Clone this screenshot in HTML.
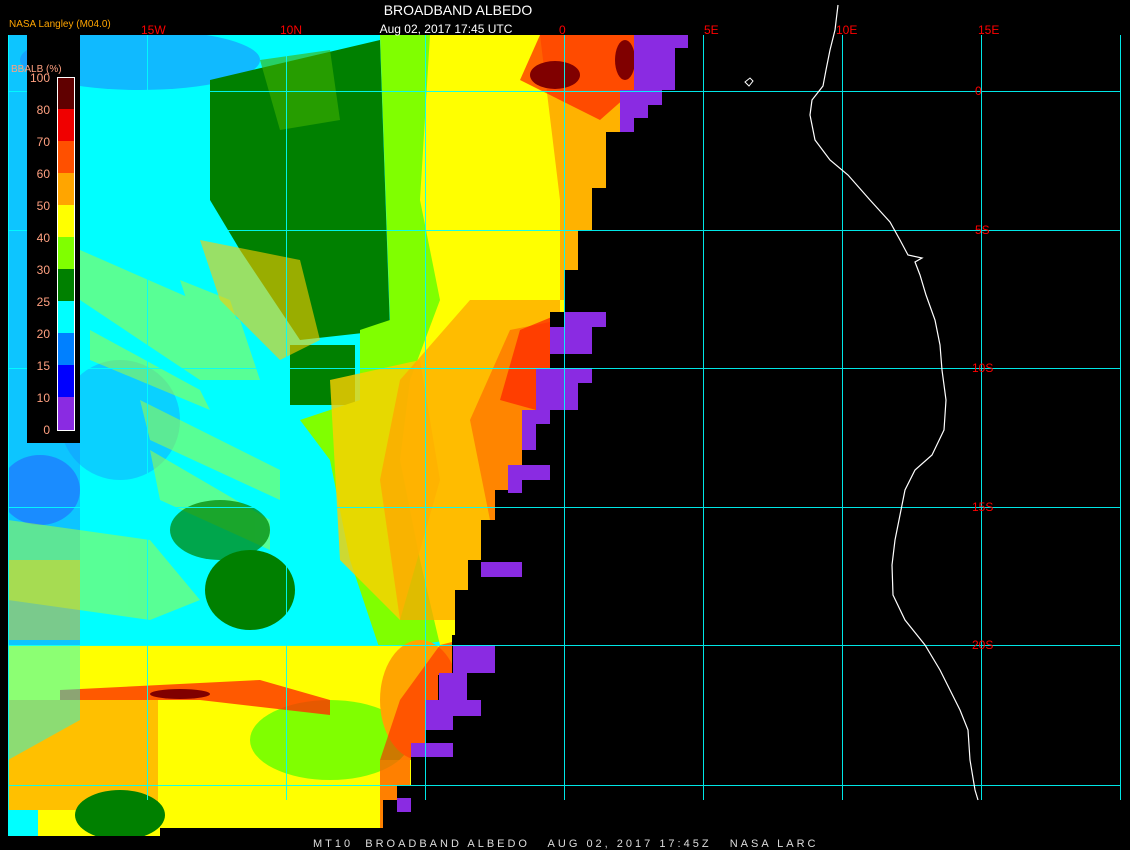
<!DOCTYPE html>
<html><head><meta charset="utf-8"><style>
html,body{margin:0;padding:0;background:#000;width:1130px;height:850px;overflow:hidden}
svg{display:block}
text{font-family:"Liberation Sans",sans-serif}
</style></head><body>
<svg width="1130" height="850" viewBox="0 0 1130 850" xmlns="http://www.w3.org/2000/svg">
<rect width="1130" height="850" fill="#000"/>
<defs>
<clipPath id="d">
<polygon points="8,35 634,35 634,90 620,90 620,132 606,132 606,188 592,188 592,230 578,230 578,270 564,270 564,312 550,312 550,368 536,368 536,410 522,410 522,465 508,465 508,490 495,490 495,520 481,520 481,560 468,560 468,590 455,590 455,635 452,635 452,675 438,675 438,700 425,700 425,745 411,745 411,785 397,785 397,800 383,800 383,828 160,828 160,836 80,836 80,836 8,836"/>
</clipPath>
</defs>
<g clip-path="url(#d)">
<rect x="8" y="35" width="630" height="805" fill="#00ffff"/>
<rect x="8" y="35" width="72" height="800" fill="#1a8cff" opacity="0.5"/>
<ellipse cx="140" cy="60" rx="120" ry="30" fill="#1a8cff" opacity="0.6"/>
<ellipse cx="40" cy="490" rx="40" ry="35" fill="#1a8cff"/>
<ellipse cx="120" cy="420" rx="60" ry="60" fill="#1a8cff" opacity="0.4"/>
<g fill="#a0ff40" opacity="0.55">
<polygon points="80,250 240,320 260,380 200,380 80,300"/>
<polygon points="140,400 280,470 280,500 150,440"/>
<polygon points="90,330 200,390 210,410 90,360"/>
<polygon points="150,450 270,520 270,550 160,500"/>
<polygon points="8,520 150,540 200,600 150,620 8,600"/>
<polygon points="180,280 230,300 240,330 190,310"/>
</g>
<polygon points="8,560 80,560 80,640 8,640" fill="#ffd000" opacity="0.45"/>
<polygon points="210,80 380,40 390,330 300,340 240,250 210,200" fill="#008000"/>
<polygon points="260,60 330,50 340,120 280,130" fill="#40b000" opacity="0.6"/>
<rect x="290" y="345" width="65" height="60" fill="#008000"/>
<ellipse cx="250" cy="590" rx="45" ry="40" fill="#008000"/>
<ellipse cx="220" cy="530" rx="50" ry="30" fill="#008000" opacity="0.7"/>
<polygon points="380,35 460,35 450,640 380,650 350,560 330,460 300,420 360,400 360,330 390,320" fill="#80ff00"/>
<polygon points="200,240 300,260 320,340 280,360 220,300" fill="#ffcc00" opacity="0.6"/>
<polygon points="430,35 640,35 640,640 440,645 420,560 400,460 410,380 440,300 420,200" fill="#ffff00"/>
<polygon points="330,380 420,360 440,480 400,620 340,560" fill="#ffd000" opacity="0.8"/>
<polygon points="470,300 560,300 560,620 400,620 380,480 400,380" fill="#ffa500" opacity="0.75"/>
<polygon points="540,35 640,35 640,300 560,300 560,200" fill="#ffa500" opacity="0.85"/>
<polygon points="510,330 560,320 560,520 490,520 470,420" fill="#ff6000" opacity="0.6"/>
<rect x="8" y="645" width="460" height="200" fill="#ffff00"/>
<rect x="8" y="700" width="150" height="110" fill="#ffa500" opacity="0.7"/>
<ellipse cx="330" cy="740" rx="80" ry="40" fill="#80ff00"/>
<ellipse cx="420" cy="700" rx="40" ry="60" fill="#ffa500"/>
<polygon points="60,690 260,680 330,700 330,715 200,700 60,700" fill="#ff3000" opacity="0.8"/>
<ellipse cx="180" cy="694" rx="30" ry="5" fill="#800000"/>
<polygon points="8,645 80,645 80,720 8,760" fill="#00ffff" opacity="0.45"/>
<ellipse cx="120" cy="815" rx="45" ry="25" fill="#008000"/>
<rect x="8" y="810" width="30" height="30" fill="#00ffff"/>
<polygon points="540,35 634,35 634,90 600,120 560,100 520,80" fill="#ff2000" opacity="0.7"/>
<ellipse cx="555" cy="75" rx="25" ry="14" fill="#800000"/>
<ellipse cx="625" cy="60" rx="10" ry="20" fill="#800000"/>
<polygon points="520,330 564,312 550,368 536,410 500,400" fill="#ff2000" opacity="0.7"/>
<polygon points="440,645 460,640 450,700 420,760 380,760 400,700" fill="#ff2000" opacity="0.6"/>
<rect x="380" y="760" width="30" height="70" fill="#ff6000" opacity="0.8"/>
</g>
<g fill="#8a2be2">
<rect x="634" y="35" width="54" height="13"/><rect x="634" y="48" width="41" height="42"/>
<rect x="620" y="90" width="42" height="15"/><rect x="620" y="105" width="28" height="13"/><rect x="620" y="118" width="14" height="14"/>
<rect x="564" y="312" width="42" height="15"/><rect x="550" y="327" width="42" height="27"/>
<rect x="536" y="368" width="56" height="15"/><rect x="536" y="383" width="42" height="27"/><rect x="522" y="410" width="28" height="14"/><rect x="522" y="424" width="14" height="26"/>
<rect x="508" y="465" width="42" height="15"/><rect x="508" y="480" width="14" height="13"/>
<rect x="481" y="562" width="41" height="15"/>
<rect x="453" y="645" width="42" height="28"/><rect x="439" y="673" width="28" height="27"/><rect x="425" y="700" width="56" height="16"/><rect x="425" y="716" width="28" height="14"/>
<rect x="411" y="743" width="42" height="14"/>
<rect x="397" y="798" width="14" height="14"/>
</g>
<g stroke="#00ffff" stroke-width="1" opacity="0.9">
<line x1="8" y1="91.5" x2="1120" y2="91.5"/><line x1="8" y1="230.5" x2="1120" y2="230.5"/><line x1="8" y1="368.5" x2="1120" y2="368.5"/>
<line x1="8" y1="507.5" x2="1120" y2="507.5"/><line x1="8" y1="645.5" x2="1120" y2="645.5"/><line x1="8" y1="785.5" x2="1120" y2="785.5"/>
<line x1="8.5" y1="35" x2="8.5" y2="836"/><line x1="147.5" y1="35" x2="147.5" y2="800"/><line x1="286.5" y1="35" x2="286.5" y2="800"/>
<line x1="425.5" y1="35" x2="425.5" y2="800"/><line x1="564.5" y1="35" x2="564.5" y2="800"/><line x1="703.5" y1="35" x2="703.5" y2="800"/>
<line x1="842.5" y1="35" x2="842.5" y2="800"/><line x1="981.5" y1="35" x2="981.5" y2="800"/><line x1="1120.5" y1="35" x2="1120.5" y2="800"/>
</g>
<polyline fill="none" stroke="#fff" stroke-width="1.2" points="838,5 835,30 830,50 826,70 823,86 812,100 810,115 815,140 830,160 848,175 870,200 890,222 900,240 908,255 922,258 915,262 920,275 926,295 935,320 940,345 942,370 946,400 944,430 932,455 915,470 905,490 900,515 895,540 892,565 893,595 905,620 925,645 940,670 950,690 960,710 968,730 970,760 975,790 978,800"/>
<path d="M745,82 l5,-4 l3,3 l-4,5 z" fill="none" stroke="#fff"/>
<rect x="27" y="35" width="53" height="408" fill="#000"/>
<g>
<rect x="57" y="77" width="17" height="32" fill="#600000"/>
<rect x="57" y="109" width="17" height="32" fill="#f00000"/>
<rect x="57" y="141" width="17" height="32" fill="#ff5000"/>
<rect x="57" y="173" width="17" height="32" fill="#ffa500"/>
<rect x="57" y="205" width="17" height="32" fill="#ffff00"/>
<rect x="57" y="237" width="17" height="32" fill="#80ff00"/>
<rect x="57" y="269" width="17" height="32" fill="#008000"/>
<rect x="57" y="301" width="17" height="32" fill="#00ffff"/>
<rect x="57" y="333" width="17" height="32" fill="#0080ff"/>
<rect x="57" y="365" width="17" height="32" fill="#0000ff"/>
<rect x="57" y="397" width="17" height="33" fill="#8a2be2"/>
<rect x="57.5" y="77.5" width="17" height="353" fill="none" stroke="#fff"/>
</g>
<g fill="#ffa080" font-size="12" text-anchor="end">
<text x="50" y="82">100</text><text x="50" y="114">80</text><text x="50" y="146">70</text><text x="50" y="178">60</text>
<text x="50" y="210">50</text><text x="50" y="242">40</text><text x="50" y="274">30</text><text x="50" y="306">25</text>
<text x="50" y="338">20</text><text x="50" y="370">15</text><text x="50" y="402">10</text><text x="50" y="434">0</text>
</g>
<text x="11" y="72" fill="#ffa080" font-size="10">BBALB (%)</text>
<text x="9" y="27" fill="#ffa500" font-size="10">NASA Langley (M04.0)</text>
<text x="458" y="15" fill="#fff" font-size="14" text-anchor="middle">BROADBAND ALBEDO</text>
<text x="446" y="33" fill="#fff" font-size="12" text-anchor="middle">Aug 02, 2017 17:45 UTC</text>
<g fill="#ff0000" font-size="12" font-family="Liberation Mono, monospace">
<text x="141" y="34">15W</text><text x="280" y="34">10N</text><text x="559" y="34">0</text>
<text x="704" y="34">5E</text><text x="836" y="34">10E</text><text x="978" y="34">15E</text>
<text x="975" y="95">0</text><text x="975" y="234">5S</text><text x="972" y="372">10S</text>
<text x="972" y="511">15S</text><text x="972" y="649">20S</text>
</g>
<text x="313" y="847" fill="#ddd" font-size="11" font-family="Liberation Mono, monospace" letter-spacing="3" style="white-space:pre" xml:space="preserve">MT10  BROADBAND ALBEDO   AUG 02, 2017 17:45Z   NASA LARC</text>
</svg>
</body></html>
